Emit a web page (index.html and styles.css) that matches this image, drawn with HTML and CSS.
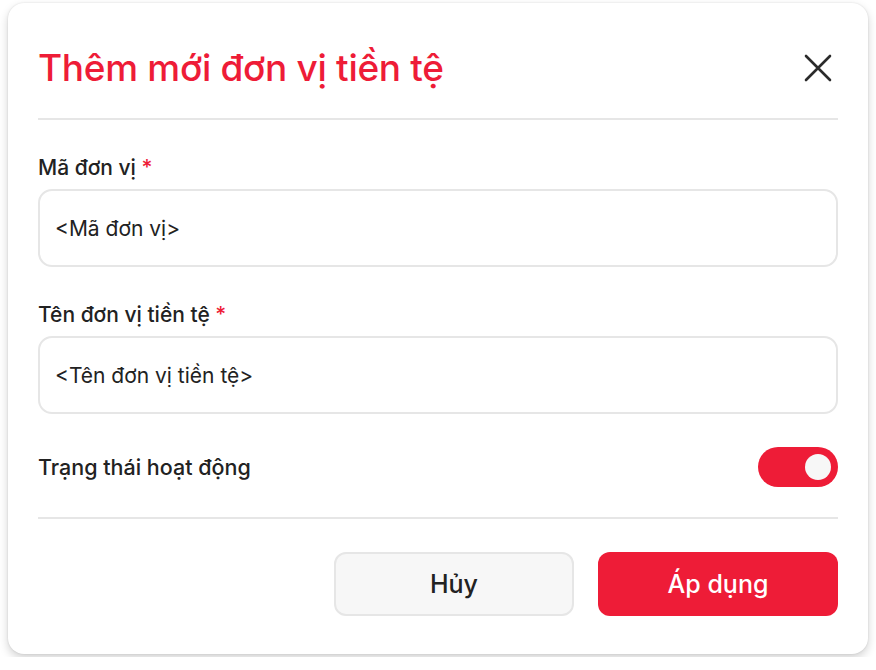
FILE: index.html
```html
<!DOCTYPE html>
<html lang="vi">
<head>
    <meta charset="UTF-8">
    <meta name="viewport" content="width=device-width, initial-scale=1.0">
    <title>Thêm mới đơn vị tiền tệ</title>
    <link rel="stylesheet" href="styles.css">
</head>
<body>
    <div class="modal">
        <div class="modal-header">
            <h1>Thêm mới đơn vị tiền tệ</h1>
            <button class="close-btn" type="button" aria-label="Đóng">
                <svg width="28" height="28" viewBox="0 0 28 28">
                    <path d="M2 2 L26 26 M26 2 L2 26" stroke="#2b2b2b" stroke-width="2.6" stroke-linecap="round"/>
                </svg>
            </button>
        </div>
        <form class="modal-body">
            <div class="form-group">
                <label for="code">Mã đơn vị <span class="req">*</span></label>
                <input type="text" id="code" placeholder="<Mã đơn vị>">
            </div>
            <div class="form-group">
                <label for="name">Tên đơn vị tiền tệ <span class="req">*</span></label>
                <input type="text" id="name" placeholder="<Tên đơn vị tiền tệ>">
            </div>
            <div class="toggle-row">
                <span>Trạng thái hoạt động</span>
                <span class="switch on"><span class="knob"></span></span>
            </div>
        </form>
        <div class="modal-footer">
            <button type="button" class="btn btn-cancel">Hủy</button>
            <button type="button" class="btn btn-apply">Áp dụng</button>
        </div>
    </div>
</body>
</html>
```

FILE: styles.css
```css
body {
    font-family: 'Inter', 'Noto Sans', sans-serif;
    background-color: #ffffff;
    color: #222222;
    margin: 0;
    padding: 3px 8px;
}
.modal {
    width: 860px;
    box-sizing: border-box;
    background-color: #ffffff;
    border-radius: 16px;
    box-shadow: 0 4px 10px rgba(0, 0, 0, 0.18), 0 0 2px rgba(0, 0, 0, 0.12);
    padding: 0 30px 38px;
}
.modal-header {
    display: flex;
    justify-content: space-between;
    align-items: center;
    height: 117px;
    padding-top: 14px;
    box-sizing: border-box;
    border-bottom: 2px solid #e6e6e6;
}
h1 {
    margin: 0;
    color: #ee1c37;
    font-size: 37px;
    font-weight: 500;
    letter-spacing: -0.3px;
}
.close-btn {
    background: none;
    border: none;
    padding: 0;
    margin-right: 6px;
    display: flex;
    cursor: pointer;
}
.modal-body {
    padding-top: 34px;
    border-bottom: 2px solid #e6e6e6;
}
.form-group {
    margin-bottom: 34px;
}
.form-group label {
    display: block;
    font-size: 21px;
    line-height: 28px;
    font-weight: 500;
    color: #222222;
    margin-bottom: 7px;
}
.req {
    color: #ee1c37;
}
.form-group input {
    width: 100%;
    height: 78px;
    box-sizing: border-box;
    border: 2px solid #e6e6e6;
    border-radius: 14px;
    padding: 0 15px;
    font-family: inherit;
    font-size: 21px;
    color: #222222;
    outline: none;
}
.form-group input::placeholder {
    color: #222222;
}
.toggle-row {
    display: flex;
    justify-content: space-between;
    align-items: center;
    font-size: 21.5px;
    font-weight: 500;
    margin-top: -1px;
    padding-bottom: 30px;
}
.switch {
    width: 80px;
    height: 40px;
    border-radius: 20px;
    background-color: #ee1c37;
    display: flex;
    align-items: center;
    justify-content: flex-end;
    padding: 0 7px;
    box-sizing: border-box;
}
.knob {
    width: 26px;
    height: 26px;
    border-radius: 50%;
    background-color: #f7f7f7;
}
.modal-footer {
    display: flex;
    justify-content: flex-end;
    gap: 24px;
    padding-top: 33px;
}
.btn {
    width: 240px;
    height: 64px;
    border-radius: 12px;
    font-family: inherit;
    font-size: 25px;
    font-weight: 500;
    cursor: pointer;
}
.btn-cancel {
    background-color: #f7f7f7;
    border: 2px solid #e6e6e6;
    color: #222222;
}
.btn-apply {
    background-color: #ee1c37;
    border: none;
    color: #ffffff;
}
```
